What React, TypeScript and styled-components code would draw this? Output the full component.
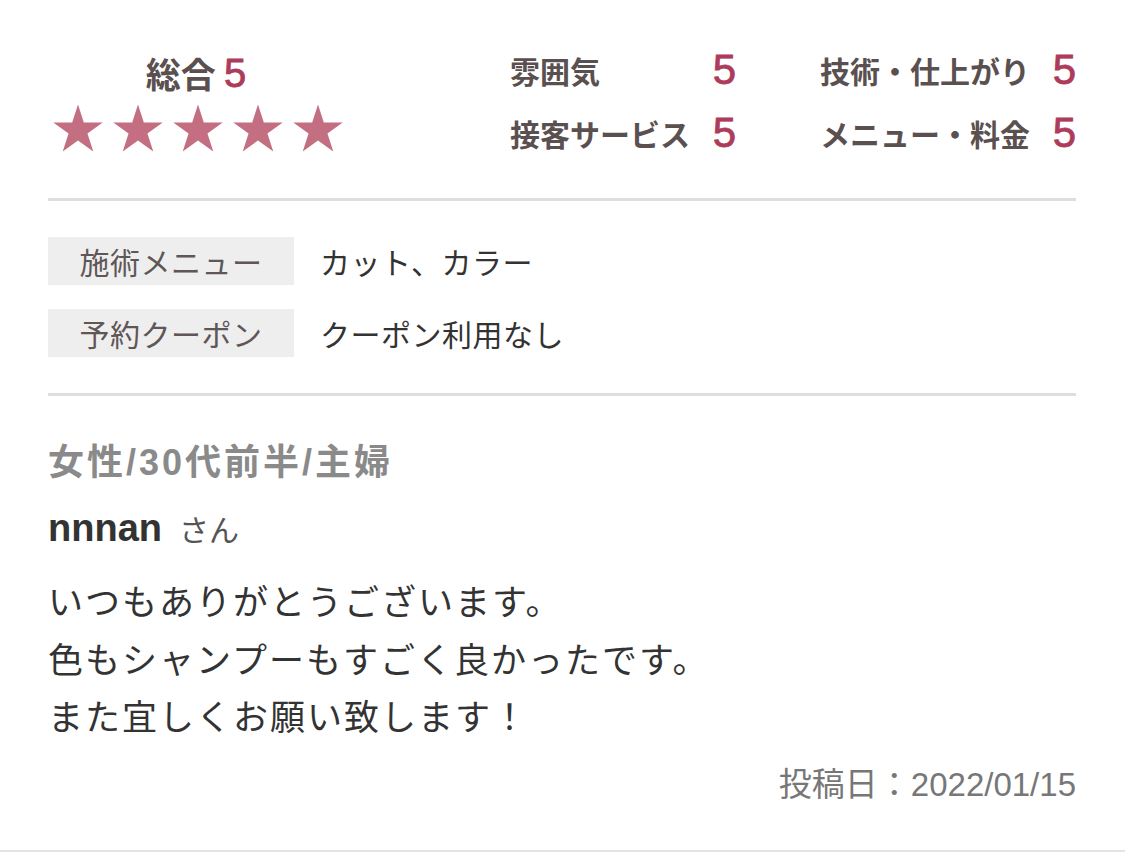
import React from "react";
import styled, { createGlobalStyle } from "styled-components";

const GlobalStyle = createGlobalStyle`
  html, body {
    margin: 0;
    padding: 0;
    background: #fff;
  }
  body {
    font-family: "Liberation Sans", "Noto Sans CJK JP", sans-serif;
    color: #333;
  }
`;

const Card = styled.div`
  border-bottom: 3px solid #e4e4e4;
  padding: 0 49px 0 48px;
  height: 853px;
  box-sizing: border-box;
`;

const Summary = styled.section`
  display: flex;
  align-items: flex-start;
  height: 201px;
  box-sizing: border-box;
  padding-top: 45px;
  border-bottom: 3px solid #dedede;
`;

const Overall = styled.div`
  width: 296px;
  display: flex;
  flex-direction: column;
  align-items: center;
  padding-top: 6px;
`;

const OverallTitle = styled.div`
  display: flex;
  align-items: center;
  gap: 8px;
  height: 43px;
  font-size: 35px;
  font-weight: 700;
  color: #5b5050;
`;

const Score = styled.span<{ $size: number }>`
  font-family: "Liberation Sans", sans-serif;
  font-size: ${(p) => p.$size}px;
  font-weight: 400;
  line-height: 1;
  color: #ad3b5b;
  -webkit-text-stroke: 0.8px #ad3b5b;
`;

const Stars = styled.div`
  display: flex;
  gap: 10px;
  margin-top: 10px;
  padding-left: 4px;
`;

const StarIcon = styled.svg`
  width: 50px;
  height: 50px;
  display: block;
`;

const Ratings = styled.div`
  margin-left: auto;
  display: grid;
  grid-template-columns: 226px 256px;
  column-gap: 84px;
  row-gap: 13px;
`;

const RatingItem = styled.div`
  display: flex;
  align-items: center;
  justify-content: space-between;
  height: 50px;
`;

const RatingLabel = styled.span`
  font-size: 30px;
  font-weight: 700;
  color: #5b5050;
`;

const Details = styled.section`
  display: flex;
  flex-direction: column;
  gap: 24px;
  padding: 36px 0;
  border-bottom: 3px solid #dedede;
`;

const DetailRow = styled.div`
  display: flex;
  align-items: center;
  gap: 26px;
`;

const DetailLabel = styled.div`
  width: 246px;
  height: 48px;
  background: #eeeeee;
  display: flex;
  align-items: center;
  justify-content: center;
  font-size: 30px;
  letter-spacing: 0.5px;
  color: #5f5757;
`;

const DetailValue = styled.div`
  font-size: 30px;
  letter-spacing: 0.5px;
  color: #333;
`;

const Review = styled.section`
  padding-top: 42px;
`;

const Profile = styled.div`
  font-size: 36px;
  font-weight: 700;
  letter-spacing: 3px;
  color: #8a8a8a;
  line-height: 50px;
`;

const Name = styled.div`
  margin-top: 15px;
  line-height: 50px;
  display: flex;
  align-items: baseline;
  gap: 17px;
`;

const NameText = styled.span`
  font-size: 38px;
  font-weight: 700;
  color: #333;
`;

const Honorific = styled.span`
  font-size: 30px;
  color: #555;
`;

const Comment = styled.p`
  margin: 18px 0 0;
  font-size: 35px;
  line-height: 57.6px;
  color: #333;
  letter-spacing: 2px;
`;

const PostedAt = styled.div`
  margin-top: 13px;
  text-align: right;
  font-size: 33px;
  line-height: 50px;
  color: #777;
`;

function Star() {
  return (
    <StarIcon viewBox="0 0 50 50">
      <polygon
        fill="#c46f81"
        points="25,0.5 30.84,18.47 49.73,18.47 34.44,29.57 40.28,47.53 25,36.43 9.72,47.53 15.56,29.57 0.27,18.47 19.16,18.47"
      />
    </StarIcon>
  );
}

const ratings = [
  { label: "雰囲気", score: 5 },
  { label: "技術・仕上がり", score: 5 },
  { label: "接客サービス", score: 5 },
  { label: "メニュー・料金", score: 5 },
];

export default function App() {
  return (
    <>
      <GlobalStyle />
      <Card>
        <Summary>
          <Overall>
            <OverallTitle>
              総合<Score $size={40}>5</Score>
            </OverallTitle>
            <Stars>
              {[0, 1, 2, 3, 4].map((i) => (
                <Star key={i} />
              ))}
            </Stars>
          </Overall>
          <Ratings>
            {ratings.map((r) => (
              <RatingItem key={r.label}>
                <RatingLabel>{r.label}</RatingLabel>
                <Score $size={42}>{r.score}</Score>
              </RatingItem>
            ))}
          </Ratings>
        </Summary>

        <Details>
          <DetailRow>
            <DetailLabel>施術メニュー</DetailLabel>
            <DetailValue>カット、カラー</DetailValue>
          </DetailRow>
          <DetailRow>
            <DetailLabel>予約クーポン</DetailLabel>
            <DetailValue>クーポン利用なし</DetailValue>
          </DetailRow>
        </Details>

        <Review>
          <Profile>女性/30代前半/主婦</Profile>
          <Name>
            <NameText>nnnan</NameText>
            <Honorific>さん</Honorific>
          </Name>
          <Comment>
            いつもありがとうございます。
            <br />
            色もシャンプーもすごく良かったです。
            <br />
            また宜しくお願い致します！
          </Comment>
          <PostedAt>投稿日：2022/01/15</PostedAt>
        </Review>
      </Card>
    </>
  );
}
